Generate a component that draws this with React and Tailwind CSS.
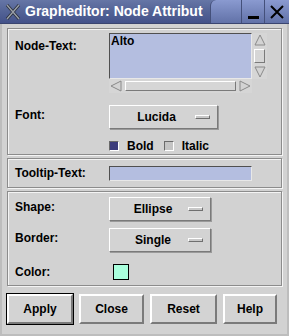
import React from "react";

const font = { fontFamily: '"Liberation Sans", Arial, sans-serif' };

// raised motif-style dropdown button
const OptionMenu = ({ label, width }) => (
  <div
    className={`${width} h-[24px] flex items-center bg-[#d3d3d3] border border-t-white border-l-white border-r-[#7a7a7a] border-b-[#7a7a7a] shadow-[1px_1px_0_#9a9a9a]`}
  >
    <span className="flex-1 text-center pl-[8px] text-[12px] font-bold text-black">{label}</span>
    <span className="w-[15px] h-[4px] mr-[7px] bg-[#c8c8c8] border border-t-white border-l-white border-r-[#6f6f6f] border-b-[#6f6f6f]" />
  </div>
);

const Panel = ({ className, children }) => (
  <div
    className={`mx-[5px] border border-[#8c8c8c] shadow-[inset_1px_1px_0_#f4f4f4,1px_1px_0_#f4f4f4] ${className}`}
  >
    {children}
  </div>
);

const Button = ({ label, width, def }) => (
  <div className={def ? "border border-black" : "p-[1px]"}>
    <div
      className={`${width} h-[30px] flex items-center justify-center bg-[#d3d3d3] border-2 border-t-white border-l-white border-r-[#7a7a7a] border-b-[#7a7a7a] text-[12px] font-bold text-black`}
    >
      {label}
    </div>
  </div>
);

const Arrow = ({ dir }) => {
  const pts = {
    up: "1,11 6,1 11,11",
    down: "1,1 6,11 11,1",
    left: "11,1 1,6 11,11",
    right: "1,1 11,6 1,11",
  }[dir];
  return (
    <svg width="12" height="12" viewBox="0 0 12 12">
      <polygon points={pts} fill="#d3d3d3" stroke="#8a8a8a" strokeWidth="1" />
    </svg>
  );
};

export default function App() {
  return (
    <div
      className="w-[289px] h-[336px] bg-[#d2d2d2] flex flex-col overflow-hidden text-black"
      style={font}
    >
      {/* title bar */}
      <div className="h-[24px] flex items-stretch bg-gradient-to-b from-[#6676a6] via-[#536396] to-[#43528a] border-b border-[#3a4570]">
        <div className="w-[25px] flex items-center justify-center">
          <svg width="16" height="16" viewBox="0 0 16 16">
            <path d="M2 1 L14 15 M14 1 L2 15" stroke="#2a2f3a" strokeWidth="3" />
            <path d="M2 1 L14 15 M14 1 L2 15" stroke="#9aa0aa" strokeWidth="1.4" />
          </svg>
        </div>
        <div className="w-[185px] flex items-center text-[14px] font-bold text-white whitespace-nowrap overflow-hidden">
          Grapheditor: Node Attribut
        </div>
        <div className="w-[31px] rounded-tl-[6px] bg-gradient-to-b from-[#8a9ad0] to-[#6272a8] border-l border-[#44507a]" />
        <div className="w-[23px] flex items-end justify-center pb-[4px] bg-gradient-to-b from-[#8a9ad0] to-[#6272a8] border-l border-[#44507a]">
          <div className="w-[11px] h-[3px] bg-black" />
        </div>
        <div className="flex-1 flex items-center justify-center bg-gradient-to-b from-[#8a9ad0] to-[#6272a8] border-l border-[#44507a]">
          <svg width="14" height="14" viewBox="0 0 14 14">
            <path d="M1 1 L13 13 M13 1 L1 13" stroke="#000" strokeWidth="2" />
          </svg>
        </div>
      </div>

      <div className="flex-1 flex flex-col border-l-2 border-r-2 border-b-2 border-[#bdbdbd] pt-[4px]">
        {/* node text, font, style */}
        <Panel className="h-[127px] flex flex-col">
          <div className="flex mt-[4px]">
            <div className="w-[101px] pl-[7px] pt-[4px] text-[12px] font-bold">Node-Text:</div>
            <div className="flex flex-col">
              <div className="flex">
                <div className="w-[143px] h-[46px] bg-[#b4bee0] border border-t-[#505050] border-l-[#505050] border-r-[#e8e8e8] border-b-[#e8e8e8] pl-[1px] text-[12px] font-bold leading-[14px]">
                  Alto
                </div>
                <div className="w-[15px] h-[46px] flex flex-col items-center justify-between py-[1px] bg-[#d6d6d6]">
                  <Arrow dir="up" />
                  <div className="w-[11px] h-[14px] border border-t-white border-l-white border-r-[#7a7a7a] border-b-[#7a7a7a]" />
                  <Arrow dir="down" />
                </div>
              </div>
              <div className="w-[143px] h-[14px] flex items-center justify-between px-[1px] bg-[#d6d6d6]">
                <Arrow dir="left" />
                <div className="flex-1 h-[10px] mx-[3px] border border-t-white border-l-white border-r-[#7a7a7a] border-b-[#7a7a7a]" />
                <Arrow dir="right" />
              </div>
            </div>
          </div>
          <div className="flex items-start mt-[12px]">
            <div className="w-[101px] pl-[7px] pt-[1px] text-[12px] font-bold">Font:</div>
            <OptionMenu label="Lucida" width="w-[109px]" />
          </div>
          <div className="flex items-center mt-[8px] pl-[101px] text-[12px] font-bold">
            <div className="w-[10px] h-[10px] bg-[#3c3c7c] border border-t-[#6a6a6a] border-l-[#6a6a6a] border-r-white border-b-white" />
            <span className="ml-[8px]">Bold</span>
            <div className="ml-[10px] w-[10px] h-[10px] bg-[#c4c4c4] border border-t-[#6a6a6a] border-l-[#6a6a6a] border-r-white border-b-white" />
            <span className="ml-[8px]">Italic</span>
          </div>
        </Panel>

        {/* tooltip */}
        <Panel className="h-[30px] mt-[3px] flex items-center">
          <div className="w-[101px] pl-[7px] text-[12px] font-bold">Tooltip-Text:</div>
          <div className="w-[143px] h-[15px] bg-[#b4bee0] border border-t-[#505050] border-l-[#505050] border-r-[#e8e8e8] border-b-[#e8e8e8]" />
        </Panel>

        {/* shape, border, color */}
        <Panel className="h-[95px] mt-[3px] flex flex-col pt-[5px]">
          <div className="flex items-start">
            <div className="w-[101px] pl-[7px] pt-[1px] text-[12px] font-bold">Shape:</div>
            <OptionMenu label="Ellipse" width="w-[102px]" />
          </div>
          <div className="flex items-start mt-[7px]">
            <div className="w-[101px] pl-[7px] pt-[1px] text-[12px] font-bold">Border:</div>
            <OptionMenu label="Single" width="w-[102px]" />
          </div>
          <div className="flex items-center mt-[11px]">
            <div className="w-[105px] pl-[7px] text-[12px] font-bold">Color:</div>
            <div className="w-[16px] h-[16px] bg-[#aaffdd] border border-black" />
          </div>
        </Panel>

        {/* buttons */}
        <div className="flex items-center gap-[4px] pl-[4px] mt-[7px]">
          <Button label="Apply" width="w-[66px]" def />
          <Button label="Close" width="w-[65px]" />
          <Button label="Reset" width="w-[67px]" />
          <Button label="Help" width="w-[54px]" />
        </div>
      </div>
    </div>
  );
}
